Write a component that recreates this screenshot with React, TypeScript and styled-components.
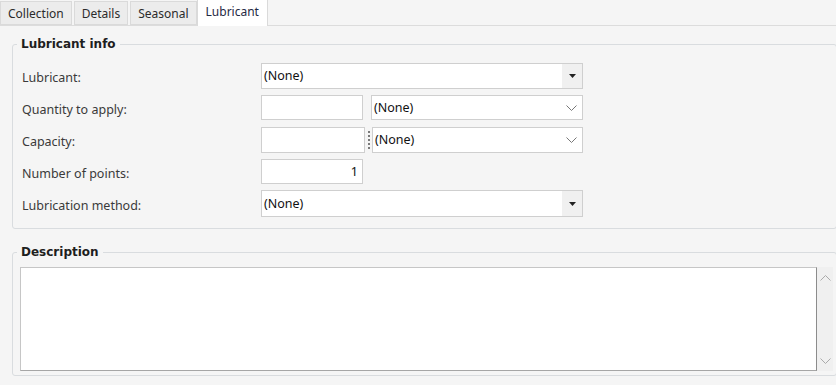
import React from "react";
import styled, { createGlobalStyle } from "styled-components";

const Global = createGlobalStyle`
  html, body { margin: 0; padding: 0; background: #f5f5f5; }
  body { font-family: "Noto Sans", "Open Sans", sans-serif; font-size: 12.5px; color: #333; }
  * { box-sizing: border-box; }
`;

const Page = styled.div`
  width: 836px;
  height: 385px;
  background: #f5f5f5;
  overflow: hidden;
  display: flex;
  flex-direction: column;
`;

const TabBar = styled.div`
  display: flex;
  align-items: flex-end;
  gap: 2px;
  height: 26px;
  border-bottom: 1px solid #dcdcdc;
  background: #f5f5f5;
`;

const Tab = styled.div<{ $active?: boolean }>`
  height: ${(p) => (p.$active ? "27px" : "24px")};
  margin-bottom: ${(p) => (p.$active ? "-1px" : "0")};
  margin-left: ${(p) => (p.$active ? "-2px" : "0")};
  padding: 0 ${(p) => (p.$active ? "8px" : "7px")};
  padding-bottom: ${(p) => (p.$active ? "4px" : "0")};
  display: flex;
  align-items: center;
  background: ${(p) => (p.$active ? "#ffffff" : "#ececec")};
  border: 1px solid #dadada;
  border-bottom: ${(p) => (p.$active ? "none" : "1px solid #dadada")};
  color: ${(p) => (p.$active ? "#1f2a44" : "#2b2b2b")};
  font-size: 12px;
`;

const Group = styled.fieldset<{ $top: number }>`
  margin: ${(p) => p.$top}px -1px 0 12px;
  padding: 0;
  border: 1px solid #d9dcdf;
  border-radius: 3px;
  min-width: 0;
`;

const Legend = styled.legend`
  font-family: "DejaVu Sans", "Noto Sans", sans-serif;
  font-weight: bold;
  color: #1e1e1e;
  font-size: 12px;
  line-height: 16px;
  padding: 0 4px;
  margin-left: 4px;
`;

const FormGrid = styled.div`
  display: grid;
  grid-template-columns: 239px 322px;
  grid-auto-rows: 27px;
  row-gap: 5px;
  align-items: center;
  padding: 10px 0 11px 9px;
`;

const Label = styled.div`
  color: #3a3a3a;
  padding-top: 4px;
`;

const ControlRow = styled.div`
  display: flex;
  align-items: center;
  height: 100%;
`;

const Combo = styled.div<{ $h: number }>`
  flex: 1;
  height: ${(p) => p.$h}px;
  display: flex;
  align-items: center;
  background: #fff;
  border: 1px solid #cfcfcf;
  color: #111;
`;

const ComboText = styled.span`
  flex: 1;
  padding-left: 2px;
`;

const DropButton = styled.span`
  width: 20px;
  align-self: stretch;
  background: #f0f0f0;
  display: flex;
  align-items: center;
  justify-content: center;
`;

const ChevronBox = styled.span`
  width: 22px;
  display: flex;
  align-items: center;
  justify-content: center;
`;

const TextBox = styled.div<{ $w: number; $h: number }>`
  width: ${(p) => p.$w}px;
  height: ${(p) => p.$h}px;
  background: #fff;
  border: 1px solid #cfcfcf;
  display: flex;
  align-items: center;
  justify-content: flex-end;
  padding-right: 4px;
  color: #111;
`;

const Gap = styled.div<{ $w: number }>`
  width: ${(p) => p.$w}px;
  display: flex;
  justify-content: center;
`;

const Splitter = styled.div`
  width: 2px;
  height: 20px;
  background-image: radial-gradient(circle, #7a7a7a 0.9px, transparent 1px);
  background-size: 2px 4px;
  background-repeat: repeat-y;
`;

const DescRow = styled.div`
  display: flex;
  height: 104px;
  margin: 7px 0 4px 7px;
`;

const TextArea = styled.div`
  width: 797px;
  height: 104px;
  background: #fff;
  border: 1px solid #c6c6c6;
  border-right-color: #8c8c8c;
  border-bottom-color: #a6a6a6;
`;

const ScrollBar = styled.div`
  width: 16px;
  background: #f0f0f0;
  display: flex;
  flex-direction: column;
  justify-content: space-between;
  align-items: center;
  padding: 8px 0 7px;
`;

const Triangle = () => (
  <svg width="7" height="4" viewBox="0 0 7 4">
    <path d="M0 0 L7 0 L3.5 4 Z" fill="#222" />
  </svg>
);

const Chevron = ({ up, color = "#777" }: { up?: boolean; color?: string }) => (
  <svg width="11" height="6" viewBox="0 0 11 6">
    <path
      d={up ? "M0.5 5.5 L5.5 0.5 L10.5 5.5" : "M0.5 0.5 L5.5 5.5 L10.5 0.5"}
      fill="none"
      stroke={color}
      strokeWidth="1"
    />
  </svg>
);

const DropCombo = ({ h }: { h: number }) => (
  <Combo $h={h}>
    <ComboText>(None)</ComboText>
    <DropButton>
      <Triangle />
    </DropButton>
  </Combo>
);

const ChevCombo = ({ h }: { h: number }) => (
  <Combo $h={h}>
    <ComboText>(None)</ComboText>
    <ChevronBox>
      <Chevron />
    </ChevronBox>
  </Combo>
);

export default function App() {
  return (
    <Page>
      <Global />
      <TabBar>
        <Tab>Collection</Tab>
        <Tab>Details</Tab>
        <Tab>Seasonal</Tab>
        <Tab $active>Lubricant</Tab>
      </TabBar>
      <Group $top={10}>
        <Legend>Lubricant info</Legend>
        <FormGrid>
          <Label>Lubricant:</Label>
          <ControlRow>
            <DropCombo h={26} />
          </ControlRow>
          <Label>Quantity to apply:</Label>
          <ControlRow>
            <TextBox $w={102} $h={25} />
            <Gap $w={8} />
            <ChevCombo h={25} />
          </ControlRow>
          <Label>Capacity:</Label>
          <ControlRow>
            <TextBox $w={104} $h={26} />
            <Gap $w={7}>
              <Splitter />
            </Gap>
            <ChevCombo h={26} />
          </ControlRow>
          <Label>Number of points:</Label>
          <ControlRow>
            <TextBox $w={102} $h={25}>1</TextBox>
          </ControlRow>
          <Label>Lubrication method:</Label>
          <ControlRow>
            <DropCombo h={27} />
          </ControlRow>
        </FormGrid>
      </Group>
      <Group $top={15}>
        <Legend>Description</Legend>
        <DescRow>
          <TextArea />
          <ScrollBar>
            <Chevron up color="#aaaaaa" />
            <Chevron color="#aaaaaa" />
          </ScrollBar>
        </DescRow>
      </Group>
    </Page>
  );
}
